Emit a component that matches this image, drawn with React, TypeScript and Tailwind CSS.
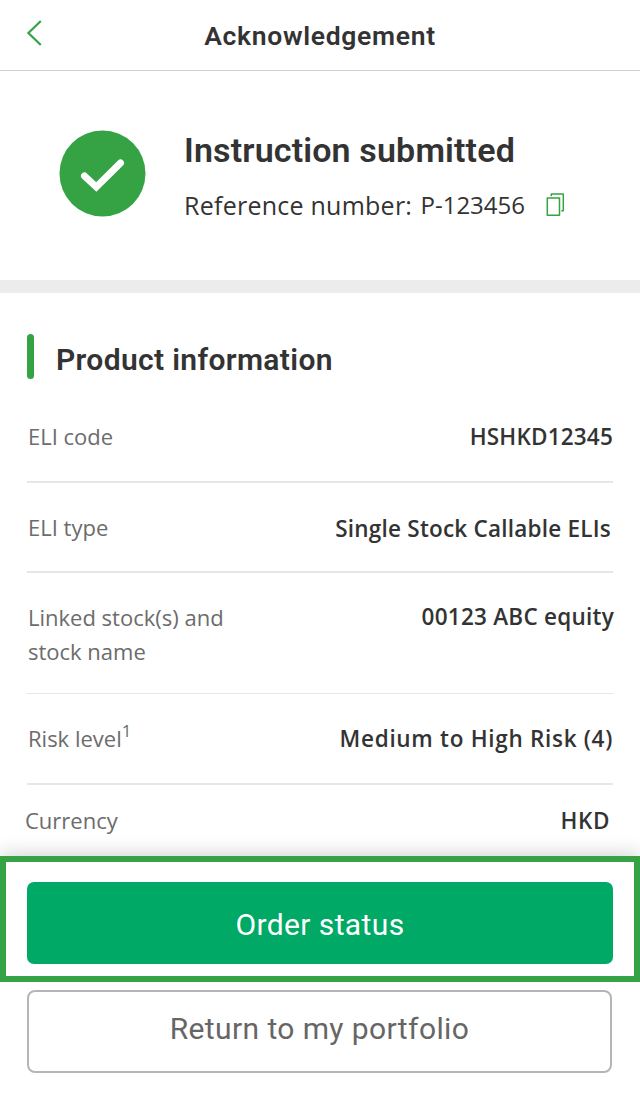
import type { ReactNode } from "react";

type RowProps = { label: ReactNode; value: string; className: string; labelClass?: string; valueClass?: string };

function Row({ label, value, className, labelClass = "pl-px", valueClass = "" }: RowProps) {
  return (
    <div className={"flex justify-between border-[#e6e6e6] " + className}>
      <div className={"-mt-px whitespace-nowrap text-[22px] leading-[34px] text-[#6c6c6c] " + labelClass}>{label}</div>
      <div className={"whitespace-nowrap text-[22.5px] font-semibold leading-[34px] text-[#333] " + valueClass}>{value}</div>
    </div>
  );
}

export default function App() {
  return (
    <div className="flex h-[1100px] w-[640px] flex-col overflow-hidden bg-white font-['Open_Sans',sans-serif] text-[#333]">
      <header className="grid h-[71px] shrink-0 grid-cols-[100px_1fr_100px] border-b border-[#cfcfcf]">
        <svg className="ml-[25px] mt-[18px]" width="20" height="30" viewBox="0 0 20 30" fill="none" stroke="#35a343" strokeWidth="2.2">
          <path d="M15.8 3 3.4 15 15.8 27" />
        </svg>
        <h1 className="text-center font-['Roboto',sans-serif] text-[26.5px] font-semibold leading-[72px] tracking-[0.7px]">Acknowledgement</h1>
      </header>
      <section className="flex h-[209px] shrink-0 pl-[59px] pt-[59px]">
        <svg width="87" height="87" viewBox="0 0 87 87" fill="none">
          <circle cx="43.5" cy="43.5" r="43" fill="#35a343" />
          <path d="M25.5 46 37.3 57 61.5 33" stroke="white" strokeWidth="7" strokeLinecap="round" strokeLinejoin="miter" />
        </svg>
        <div className="ml-[38px]">
          <h2 className="whitespace-nowrap font-['Roboto',sans-serif] text-[34px] font-semibold leading-[40px] tracking-[0.15px]">Instruction submitted</h2>
          <div className="mt-[18px] flex items-center">
            <div className="flex w-[341px] justify-between whitespace-nowrap text-[25px] leading-[34px]">
              <span className="tracking-[0.25px]">Reference number:</span>
              <span className="text-[24px]">P-123456</span>
            </div>
            <svg className="ml-[20px]" width="20" height="26" viewBox="0 0 20 26" fill="none" stroke="#35a343" strokeWidth="1.5" strokeLinejoin="round">
              <path d="M6.3 4.3V2H18.3V18.7H16.3M2.3 6H14.5V23.3H2.3Z" />
            </svg>
          </div>
        </div>
      </section>
      <div className="h-[13px] shrink-0 bg-[#ececec]" />
      <section className="h-[563px] shrink-0 overflow-hidden px-[27px]">
        <div className="flex pt-[41px]">
          <div className="h-[45px] w-[7px] rounded-full bg-[#35a343]" />
          <h2 className="ml-[22px] font-['Roboto',sans-serif] text-[30px] font-semibold leading-[51px] tracking-[0.35px]">Product information</h2>
        </div>
        <Row label="ELI code" value="HSHKD12345" className="h-[98px] border-b-2 pt-[35px]" valueClass="tracking-[0.2px]" />
        <Row label="ELI type" value="Single Stock Callable ELIs" className="h-[90px] border-b-2 pt-[28px]" valueClass="mt-px pr-[2px] tracking-[0.22px]" />
        <Row label={<>Linked stock(s) and<br />stock name</>} value="00123 ABC equity" className="h-[121px] border-b pt-[28px]" valueClass="-mt-px -mr-px tracking-[0.25px]" />
        <Row label={<>Risk level<sup className="-top-[10px] text-[17px] leading-none">1</sup></>} value="Medium to High Risk (4)" className="h-[91px] border-b-2 pt-[28px]" valueClass="tracking-[0.7px]" />
        <Row label="Currency" value="HKD" className="pt-[19px]" labelClass="-ml-[2px]" valueClass="pr-[3px] tracking-[0.6px]" />
      </section>
      <div className="h-[126px] shrink-0 border-[6px] border-[#35a343] px-[21px] pt-[20px] shadow-[0_-2px_18px_rgba(0,0,0,0.18)]">
        <button className="block h-[82px] w-full rounded-[7px] bg-[#00a966] pt-[2px] font-['Roboto',sans-serif] text-[30px] tracking-[0.4px] text-white">Order status</button>
      </div>
      <div className="relative grow bg-white pl-[27px] pr-[28px] pt-[8px]">
        <button className="block h-[83px] w-full rounded-lg border-2 border-[#b5b5b5] pb-[6px] font-['Roboto',sans-serif] text-[30px] tracking-[0.4px] text-[#666]">Return to my portfolio</button>
      </div>
    </div>
  );
}
